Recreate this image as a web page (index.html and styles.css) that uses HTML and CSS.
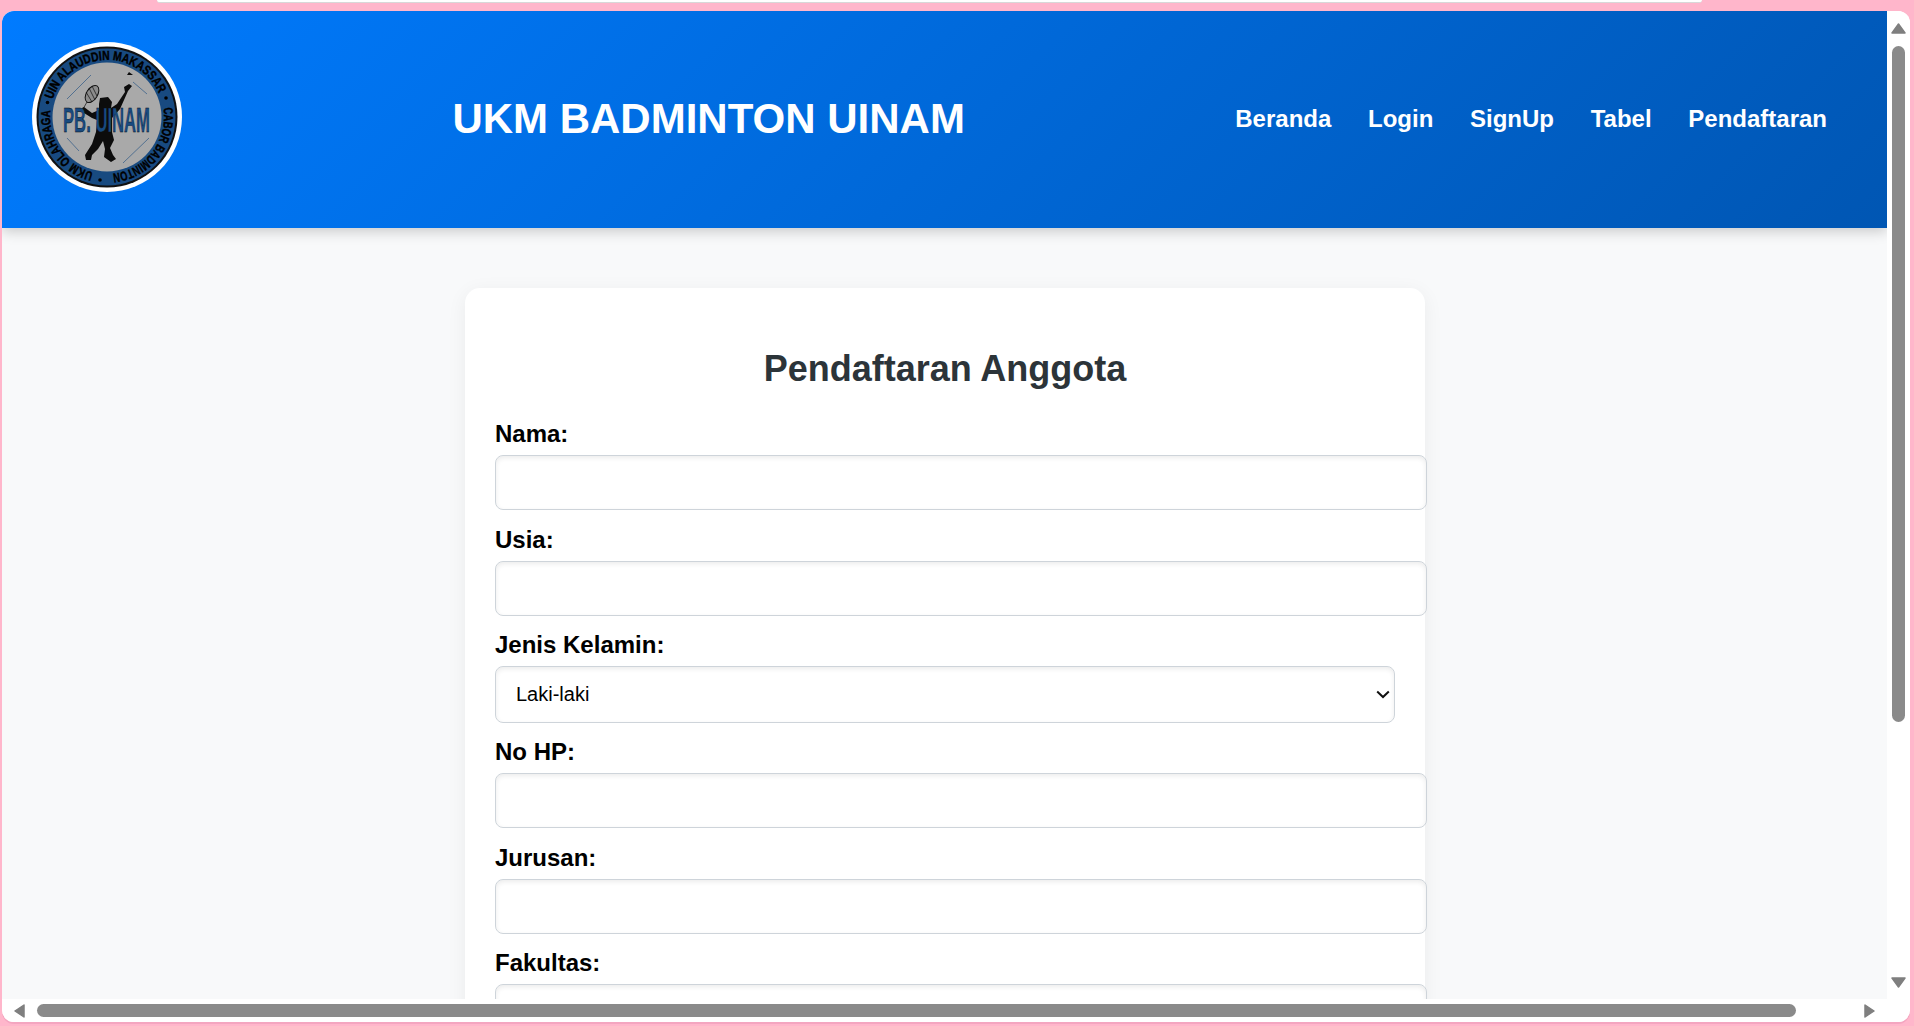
FILE: index.html
```html
<!DOCTYPE html>
<html lang="en">
<head>
    <meta charset="UTF-8">
    <meta name="viewport" content="width=device-width, initial-scale=1.0">
    <title>UKM Badminton UINAM</title>
    <link rel="stylesheet" href="styles.css">
</head>
<body>

    <div class="top-strip"></div>

    <div class="window">
        <div class="viewport">
            <header class="site-header">
                <svg class="logo" viewBox="0 0 150 150" role="img" aria-label="Logo PB. UINAM">
                    <defs>
                        <path id="ringText" d="M75 132 A57 57 0 1 1 75 18 A57 57 0 1 1 75 132"></path>
                    </defs>
                    <circle cx="75" cy="75" r="75" fill="#ffffff"></circle>
                    <circle cx="75" cy="75" r="70.5" fill="#111111"></circle>
                    <circle cx="75" cy="75" r="68.5" fill="#184a80"></circle>
                    <circle cx="75" cy="75" r="54.5" fill="#a9a9a9"></circle>
                    <text class="ring-text"><textPath href="#ringText" startOffset="14" textLength="82" lengthAdjust="spacingAndGlyphs">UKM OLAHRAGA</textPath></text>
                    <text class="ring-text"><textPath href="#ringText" startOffset="107" textLength="137" lengthAdjust="spacingAndGlyphs">UIN ALAUDDIN MAKASSAR</textPath></text>
                    <text class="ring-text"><textPath href="#ringText" startOffset="259" textLength="93" lengthAdjust="spacingAndGlyphs">CABOR BADMINTON</textPath></text>
                    <circle cx="68" cy="138" r="1.8" fill="#000000"></circle>
                    <circle cx="15.5" cy="60.5" r="1.8" fill="#000000"></circle>
                    <circle cx="134" cy="56" r="1.8" fill="#000000"></circle>
                    <g class="thin-lines">
                        <line x1="35" y1="57" x2="59" y2="33"></line>
                        <line x1="101" y1="40" x2="115" y2="52"></line>
                        <line x1="35" y1="96" x2="47" y2="109"></line>
                        <line x1="91" y1="121" x2="117" y2="96"></line>
                    </g>
                    <!-- player -->
                    <g class="racket">
                        <ellipse cx="60" cy="52" rx="5.5" ry="9.5" transform="rotate(32 60 52)"></ellipse>
                        <line x1="55" y1="60" x2="51" y2="67"></line>
                        <line x1="57" y1="46" x2="63" y2="58"></line>
                        <line x1="60" y1="44" x2="65" y2="54"></line>
                        <line x1="54" y1="50" x2="60" y2="60"></line>
                    </g>
                    <path class="player" d="M68 56 L76 55 L80 60 L79 66 L85 62 L93 50 L92 45 L97 42 L100 44 L96 49 L88 67 L80 76 L80 90 L82 98 L78 106 L81 113 L84 117 L79 120 L72 115 L73 107 L71 99 L66 107 L60 113 L59 118 L54 118 L53 113 L60 102 L64 90 L65 78 L60 76 L52 71 L50 66 L52 65 L60 71 L67 68 L67 62 Z"></path>
                    <path class="player" d="M97 30 L101 33 L95 33 Z"></path>
                    <text class="logo-name" x="31" y="90" textLength="87" lengthAdjust="spacingAndGlyphs">PB. UINAM</text>
                </svg>
                <h1 class="site-title">UKM BADMINTON UINAM</h1>
                <nav class="site-nav">
                    <a href="#">Beranda</a>
                    <a href="#">Login</a>
                    <a href="#">SignUp</a>
                    <a href="#">Tabel</a>
                    <a href="#">Pendaftaran</a>
                </nav>
            </header>

            <main class="form-card">
                <h2 class="form-title">Pendaftaran Anggota</h2>
                <form>
                    <label for="nama">Nama:</label>
                    <input type="text" id="nama">

                    <label for="usia">Usia:</label>
                    <input type="text" id="usia">

                    <label for="gender">Jenis Kelamin:</label>
                    <div class="select-wrap">
                        <select id="gender">
                            <option>Laki-laki</option>
                            <option>Perempuan</option>
                        </select>
                        <svg class="select-arrow" viewBox="0 0 14 9"><path d="M1.2 1.5 L7 7 L12.8 1.5"></path></svg>
                    </div>

                    <label for="hp">No HP:</label>
                    <input type="text" id="hp">

                    <label for="jurusan">Jurusan:</label>
                    <input type="text" id="jurusan">

                    <label for="fakultas">Fakultas:</label>
                    <input type="text" id="fakultas">
                </form>
            </main>
        </div>

        <div class="scroll-y">
            <svg class="arrow-up" viewBox="0 0 15 11"><path d="M7.5 1 L14 10 L1 10 Z"></path></svg>
            <div class="thumb-y"></div>
            <svg class="arrow-down" viewBox="0 0 15 11"><path d="M1 1 L14 1 L7.5 10 Z"></path></svg>
        </div>

        <div class="scroll-x">
            <svg class="arrow-left" viewBox="0 0 11 14"><path d="M10 1 L10 13 L1 7 Z"></path></svg>
            <div class="thumb-x"></div>
            <svg class="arrow-right" viewBox="0 0 11 14"><path d="M1 1 L10 7 L1 13 Z"></path></svg>
        </div>
        <div class="scroll-corner"></div>
    </div>

</body>
</html>
```

FILE: styles.css
```css
html, body {
    height: 100%;
}

body {
    margin: 0;
    background-color: #ffb6cb;
    font-family: "Liberation Sans", Arial, sans-serif;
    overflow: hidden;
}

.top-strip {
    height: 3px;
    margin: 0 212px 8px 157px;
    background-color: #ffffff;
    border-bottom: 1px solid #d8d8d8;
    border-radius: 0 0 8px 8px;
    box-sizing: border-box;
}

.window {
    display: grid;
    grid-template-columns: 1885px 23px;
    grid-template-rows: 988px 23px;
    width: 1908px;
    margin-left: 2px;
    background-color: #ffffff;
    border-radius: 12px;
    overflow: hidden;
    box-shadow: 0 2px 0 #f4a6c0;
}

.viewport {
    background-color: #f8f9fa;
    overflow: hidden;
}

/* header */
.site-header {
    display: flex;
    justify-content: space-between;
    align-items: center;
    height: 217px;
    padding: 0 30px 2px;
    box-sizing: border-box;
    background: linear-gradient(135deg, #007bff, #0056b3);
    box-shadow: 0 4px 12px rgba(0, 0, 0, 0.18);
}

.logo {
    width: 150px;
    height: 150px;
    margin-bottom: 4px;
    flex: none;
}

.ring-text {
    font-family: "Liberation Sans", Arial, sans-serif;
    font-size: 13px;
    font-weight: bold;
    fill: #000000;
    stroke: #000000;
    stroke-width: 0.4;
}

.thin-lines line {
    stroke: #184a80;
    stroke-width: 0.6;
}

.racket ellipse {
    fill: #8c8c8c;
    stroke: #111111;
    stroke-width: 1;
}

.racket line {
    stroke: #111111;
    stroke-width: 0.7;
}

.player {
    fill: #0c0c0c;
}

.logo-name {
    font-family: "Liberation Sans", Arial, sans-serif;
    font-size: 35px;
    font-weight: bold;
    fill: #184a80;
    stroke: #0c0c0c;
    stroke-width: 0.4;
}

.site-title {
    margin: 0;
    font-size: 42px;
    font-weight: bold;
    color: #ffffff;
}

.site-nav {
    display: flex;
    gap: 36.7px;
    padding-right: 30px;
}

.site-nav a {
    font-size: 24px;
    font-weight: bold;
    color: #ffffff;
    text-decoration: none;
}

/* form */
.form-card {
    width: 960px;
    margin: 60px 0 0 463px;
    padding: 30px;
    box-sizing: border-box;
    background-color: #ffffff;
    border-radius: 15px;
    box-shadow: 0 4px 20px rgba(0, 0, 0, 0.06);
}

.form-title {
    margin: 30px 0 30px;
    font-size: 36px;
    font-weight: bold;
    text-align: center;
    color: #2c3439;
}

.form-card label {
    display: block;
    margin-bottom: 8px;
    font-size: 24px;
    line-height: 27px;
    font-weight: bold;
    color: #000000;
}

.form-card input,
.form-card select {
    display: block;
    background-color: #ffffff;
    border: 1.5px solid #ced4da;
    border-radius: 8px;
    box-shadow: inset 0 2px 5px rgba(0, 0, 0, 0.08);
    box-sizing: border-box;
    font-family: "Liberation Sans", Arial, sans-serif;
    font-size: 20px;
    color: #000000;
}

.form-card input {
    width: 932px;
    height: 55px;
    margin-bottom: 15.5px;
    padding: 15px 20px;
}

.select-wrap {
    position: relative;
    width: 900px;
    margin-bottom: 15.5px;
}

.form-card select {
    width: 100%;
    height: 56.5px;
    padding: 0 20px;
    appearance: none;
}

.select-arrow {
    position: absolute;
    top: 24px;
    right: 5px;
    width: 14px;
    height: 9px;
}

.select-arrow path {
    fill: none;
    stroke: #111111;
    stroke-width: 2;
}

/* scroll bars */
.scroll-y {
    display: flex;
    flex-direction: column;
    align-items: center;
    padding: 12px 0 11px;
    box-sizing: border-box;
    background-color: #ffffff;
}

.arrow-up,
.arrow-down {
    width: 15px;
    height: 11px;
    flex: none;
}

.arrow-down {
    margin-top: auto;
}

.thumb-y {
    width: 13px;
    height: 676px;
    margin-top: 12px;
    background-color: #8a8a8a;
    border-radius: 7px;
}

.scroll-x {
    display: flex;
    align-items: center;
    padding: 0 12px;
    background-color: #ffffff;
}

.arrow-left,
.arrow-right {
    width: 11px;
    height: 14px;
    flex: none;
}

.arrow-right {
    margin-left: auto;
}

.thumb-x {
    width: 1759px;
    height: 13px;
    margin-left: 12px;
    background-color: #8a8a8a;
    border-radius: 7px;
}

.scroll-y svg path,
.scroll-x svg path {
    fill: #7f7f7f;
    stroke: #7f7f7f;
    stroke-width: 1.5;
    stroke-linejoin: round;
}

.scroll-corner {
    background-color: #ffffff;
}
```
